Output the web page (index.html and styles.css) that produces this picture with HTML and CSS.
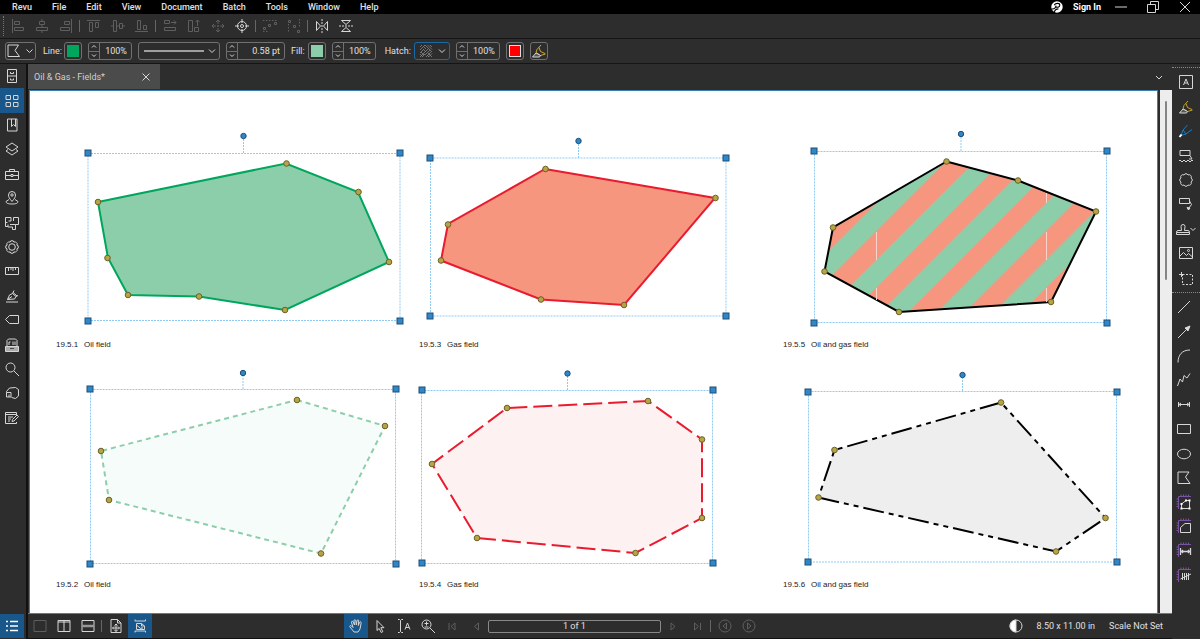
FILE: index.html
```
<!DOCTYPE html>
<html lang="en">
<head>
<meta charset="utf-8">
<title>Oil &amp; Gas - Fields</title>
<link rel="stylesheet" href="styles.css">
</head>
<body>
<div class="app">
  <header class="menubar">
    <nav class="menus" aria-label="Main menu">
      <button>Revu</button><button>File</button><button>Edit</button><button>View</button><button>Document</button><button>Batch</button><button>Tools</button><button>Window</button><button>Help</button>
    </nav>
    <div class="account">
      <svg class="brand" viewBox="0 0 13 13"><circle cx="6.500" cy="6.500" r="6.200" fill="#fff"/><path d="M3.500 4.500C5 2 9.500 2 9.500 4.500S6.500 7 5.500 6.500M.5 8.500C3 9 5 7.500 5.500 5M3.500 12.500C4 10 6 8.500 8 8.500" fill="none" stroke="#000" stroke-width="1.200"/></svg>
      <button class="signin">Sign In</button>
    </div>
    <div class="window-controls">
      <button aria-label="Minimize"><svg class="ic" viewBox="0 0 14 14"><path d="M1 7h12"/></svg></button>
      <button aria-label="Restore"><svg class="ic" viewBox="0 0 14 14"><path d="M1.500 4.500h8v8h-8zM4.500 4V1.500h8v8H10"/></svg></button>
      <button aria-label="Close"><svg class="ic" viewBox="0 0 14 14"><path d="M2 2l10 10M12 2L2 12"/></svg></button>
    </div>
  </header>

  <div class="toolbar align-tools" role="toolbar" aria-label="Alignment">
    <span class="grip"></span>
    <button class="tool off" aria-label="Align left"><svg class="ic" viewBox="0 0 14 14"><path d="M1.500 0v14M3.500 2.500h5v3h-5zM3.500 8.500h9v3h-9z"/></svg></button>
    <button class="tool off" aria-label="Align center"><svg class="ic" viewBox="0 0 14 14"><path d="M7 0v2.500M7 5.500v3M7 11.500V14M4.500 2.500h5v3h-5zM1.500 8.500h11v3h-11z"/></svg></button>
    <button class="tool off" aria-label="Align right"><svg class="ic" viewBox="0 0 14 14"><path d="M12.500 0v14M5.500 2.500h5v3h-5zM1.500 8.500h9v3h-9z"/></svg></button>
    <span class="sep"></span>
    <button class="tool off" aria-label="Align top"><svg class="ic" viewBox="0 0 14 14"><path d="M0 1.500h13M2.500 3.500h3v9h-3zM8.500 3.500h3v5h-3z"/></svg></button>
    <button class="tool off" aria-label="Align middle"><svg class="ic" viewBox="0 0 14 14"><path d="M0 7h2.500M5.500 7h3M11.500 7H14M2.500 1.500h3v11h-3zM8.500 4.500h3v5h-3z"/></svg></button>
    <button class="tool off" aria-label="Align bottom"><svg class="ic" viewBox="0 0 14 14"><path d="M0 12.500h13M2.500 1.500h3v9h-3zM8.500 6.500h3v4h-3z"/></svg></button>
    <span class="sep"></span>
    <button class="tool off" aria-label="Match width"><svg class="ic" viewBox="0 0 14 14"><path d="M1.500 1.500h5v3h-5zM1.500 8.500h11v3h-11zM8 3.500h5M11 1.500l2 2-2 2"/></svg></button>
    <button class="tool off" aria-label="Match height"><svg class="ic" viewBox="0 0 14 14"><path d="M1.500 1.500h4v11h-4zM7.500 8.500h4v4h-4zM10.500 7V1M8.500 3l2-2 2 2"/></svg></button>
    <button class="tool off" aria-label="Match size"><svg class="ic" viewBox="0 0 14 14"><path d="M7 1v4M7 9v4M1 7h4M9 7h4M5 3l2-2 2 2M5 11l2 2 2-2M3 5L1 7l2 2M11 5l2 2-2 2M6.500 6.500h1v1h-1z"/></svg></button>
    <button class="tool" aria-label="Center in page"><svg class="ic" viewBox="0 0 14 14"><circle cx="7" cy="7" r="4.500"/><circle cx="7" cy="7" r="1.500"/><path d="M7 0v4M7 10v4M0 7h4M10 7h4"/></svg></button>
    <span class="sep"></span>
    <button class="tool off" aria-label="Distribute horizontally"><svg class="ic" viewBox="0 0 14 14"><path d="M0 1.500h14M0 12.500h5" stroke-dasharray="1.500 1.500"/><path d="M.5 8.500h2v2h-2zM5.500 5.500h2v2h-2zM11.500 3.500h2v2h-2z"/></svg></button>
    <button class="tool off" aria-label="Distribute vertically"><svg class="ic" viewBox="0 0 14 14"><path d="M12.500 0v9M1.500 5v9" stroke-dasharray="1.500 1.500"/><path d="M1.500 1.500h2v2h-2zM6.500 6.500h2v2h-2zM10.500 11.500h2v2h-2z"/></svg></button>
    <span class="sep"></span>
    <button class="tool" aria-label="Flip horizontally"><svg class="ic" viewBox="0 0 14 14"><path d="M1.500 2.500v9L5.500 7zM12.500 2.500v9L8.500 7z"/><path d="M7 0v14" stroke-dasharray="2 1"/></svg></button>
    <button class="tool" aria-label="Flip vertically"><svg class="ic" viewBox="0 0 14 14"><path d="M2.500 1.500h9L7 5.500zM2.500 12.500h9L7 8.500z"/><path d="M0 7h14" stroke-dasharray="2 1"/></svg></button>
  </div>

  <div class="toolbar properties" role="toolbar" aria-label="Properties">
    <div class="picker shape"><svg class="face" viewBox="0 0 29 16"><path d="M2 2h10.500L9 7.500l4.500 6H2zM20.500 6.500l3 3 3-3"/></svg><select aria-label="Shape"><option aria-label="Polygon"></option></select></div>
    <div class="field line-field"><span class="label" id="line-label">Line:</span><button class="swatch" aria-labelledby="line-label"><i class="green"></i></button></div>
    <div class="spinner"><span class="steps"><button aria-label="Increase"><svg viewBox="0 0 8 5"><path d="M2 3.500l2-2 2 2"/></svg></button><button aria-label="Decrease"><svg viewBox="0 0 8 5"><path d="M2 1.500l2 2 2-2"/></svg></button></span><input value="100%" aria-label="Line opacity"></div>
    <div class="picker line"><svg class="face" viewBox="0 0 80 16"><path d="M5 8h60" stroke-width="1.500" stroke="#c4c4c4"/><path d="M70 6.500l3 3 3-3"/></svg><select aria-label="Line style"><option aria-label="Solid"></option></select></div>
    <div class="spinner wide"><span class="steps"><button aria-label="Increase"><svg viewBox="0 0 8 5"><path d="M2 3.500l2-2 2 2"/></svg></button><button aria-label="Decrease"><svg viewBox="0 0 8 5"><path d="M2 1.500l2 2 2-2"/></svg></button></span><input value="0.58 pt" aria-label="Line width"></div>
    <div class="field"><span class="label" id="fill-label">Fill:</span><button class="swatch" aria-labelledby="fill-label"><i class="mint"></i></button></div>
    <div class="spinner"><span class="steps"><button aria-label="Increase"><svg viewBox="0 0 8 5"><path d="M2 3.500l2-2 2 2"/></svg></button><button aria-label="Decrease"><svg viewBox="0 0 8 5"><path d="M2 1.500l2 2 2-2"/></svg></button></span><input value="100%" aria-label="Fill opacity"></div>
    <div class="field hatch-field"><label class="label" for="hatch">Hatch:</label><div class="picker hatch"><svg class="face" viewBox="0 0 34 16"><path stroke="#858585" stroke-width=".8" d="M5 4l2-2M5 7l5-5M5 10l4-4M5 14l4-4M7 14l3-3M10 2l7 7M12.500 2L17 6.500M15 2l2 2M9 4l2 2M8 6l3 3M9 10l4-4M10 12l5-5M11 14l5-5M13.500 14l3.500-3.500M5 11l3 3M6 9l3 3M13 10l4 4M12 12l2 2"/><path d="M24 6.500l3 3 3-3"/></svg><select id="hatch"><option aria-label="Cross hatch"></option></select></div></div>
    <div class="spinner"><span class="steps"><button aria-label="Increase"><svg viewBox="0 0 8 5"><path d="M2 3.500l2-2 2 2"/></svg></button><button aria-label="Decrease"><svg viewBox="0 0 8 5"><path d="M2 1.500l2 2 2-2"/></svg></button></span><input value="100%" aria-label="Hatch scale"></div>
    <button class="swatch" aria-label="Hatch color"><i class="red"></i></button>
    <button class="swatch" aria-label="Highlight"><svg class="ic" viewBox="0 0 14 14"><path stroke="#d3a928" d="M9 1L5 5.500 4 8.500l4.500 3 5-1.500M7 3.500l1.500 4 4.500 2"/><path d="M4 9l-3.500 4h7l1-1.500z" fill="#555"/></svg></button>
  </div>

  <nav class="rail left" aria-label="Panels">
    <div class="stack panels">
    <button aria-label="File access"><svg class="ic" viewBox="0 0 14 14"><path d="M2.500 .5h9v13h-9zM2.500 7h9M5.500 3v1.500h3V3M5.500 9.500V11h3V9.500"/></svg></button>
    <button class="active" aria-label="Thumbnails"><svg class="ic" viewBox="0 0 14 14"><path d="M1 1.500h4.500v4H1zM8.500 1.500H13v4H8.500zM1 8.500h4.500v4H1zM8.500 8.500H13v4H8.500z"/></svg></button>
    <button aria-label="Bookmarks"><svg class="ic" viewBox="0 0 14 14"><path d="M2.500 1v12h9.500V1zM6.500 1v7.500l2-2 2 2V1"/></svg></button>
    <button aria-label="Layers"><svg class="ic" viewBox="0 0 14 14"><path d="M7 1l6 4-6 4-6-4zM3 7.500l-2 1.500 6 4 6-4-2-1.500"/></svg></button>
    <button aria-label="Tool chest"><svg class="ic" viewBox="0 0 14 14"><path d="M.5 4.500h13v8H.5zM4.500 4.500v-2h5v2M.5 8.500H6M8 8.500h5.500M6 7.500h2v2H6z"/></svg></button>
    <button aria-label="Places"><svg class="ic" viewBox="0 0 14 14"><path d="M7 10.500C4.500 7.500 3.500 6 3.500 4a3.500 3.500 0 017 0c0 2-1 3.500-3.500 6.500zM4 8.500L1 10.500c0 2 3 2.500 6 2.500s6-.5 6-2.500L10 8.500"/><circle cx="7" cy="4" r="1.200"/></svg></button>
    <button aria-label="Spaces"><svg class="ic" viewBox="0 0 14 14"><path d="M6 1.500H.5v9H3M6 1.500V5H3.500M8.500 1.500h5v7h-3M.5 6.500h2M8.500 1.500V5M5 8.500h5.500v5H7.500v-2.500H3V8.500"/></svg></button>
    <button aria-label="Properties"><svg class="ic" viewBox="0 0 14 14"><circle cx="7" cy="7" r="3.300"/><path d="M5.800 .8h2.400l.7 1.300 1.500-.3 1.800 1.800-.3 1.500 1.300.7v2.400l-1.300.7.3 1.500-1.800 1.800-1.500-.3-.7 1.300H5.800l-.7-1.300-1.500.3-1.800-1.800.3-1.500-1.300-.7V5.800l1.300-.7-.3-1.500 1.800-1.800 1.500.3z"/></svg></button>
    <button aria-label="Measurements"><svg class="ic" viewBox="0 0 14 14"><path d="M.5 3.500h13v7H.5zM3.500 4v3M6 4v2M8 4v3M10.500 4v2"/></svg></button>
    <button aria-label="Signatures"><svg class="ic" viewBox="0 0 14 14"><path d="M1 13h12M2.500 10.500L4.500 6l3-1.500 3.500 3L9.500 10zM2.500 10.500L7 7.500M7.500 4.500l1.500-3M11 7.500l2-1M8 3.500l4 3.500"/></svg></button>
    <button aria-label="Forms"><svg class="ic" viewBox="0 0 14 14"><path d="M4.500 2.500h9v8h-9L.5 6.500z"/></svg></button>
    <button aria-label="Sets"><svg class="ic" viewBox="0 0 14 14"><path d="M2 8V2.500L3.500 1h7L12 2.500V8M4 7V4h1.500M8 3.500V7M10 3.500V7"/><path d="M.5 8.500h13v5H.5z" fill="#aaa"/><path d="M5 10.500h4" stroke="#444"/></svg></button>
    <button aria-label="Search"><svg class="ic" viewBox="0 0 14 14"><circle cx="5.500" cy="5.500" r="4.500"/><path d="M9 9l5 5"/></svg></button>
    <button aria-label="Model tree"><svg class="ic" viewBox="0 0 14 14"><path d="M1.500 6.500v-1L4.500 2l6-.5 3 2V10l-3 2.500-4-1M1.500 6.500h4.500v4.500H1.500zM4 11V8.500"/></svg></button>
    <button aria-label="Markups"><svg class="ic" viewBox="0 0 14 14"><path d="M11.500 4V1.500H.5v11h11V11M.5 3.500h11M3 6h5M3 8h3M3 10h2M7 10.500l.5-2L12 4l1.500 1.500L9 10z"/></svg></button>
    </div>
    <button class="active list-toggle" aria-label="Markups list"><svg class="ic" viewBox="0 0 14 14"><path d="M5 2.500h8M5 7h8M5 11.500h8M1 2.500h2M1 7h2M1 11.500h2" stroke-width="1.500" stroke="#fff"/></svg></button>
  </nav>

  <section class="workspace">
    <div class="tabs">
      <div class="tab"><span>Oil &amp; Gas - Fields*</span><button aria-label="Close tab"><svg class="ic small" viewBox="0 0 10 10"><path d="M1.500 1.500l7 7M8.500 1.500l-7 7"/></svg></button></div>
      <button class="tab-menu" aria-label="More tabs"><svg class="ic small" viewBox="0 0 10 10"><path d="M2 4l3 3 3-3"/></svg></button>
    </div>
    <div class="view">
      <main class="page">
        <svg class="drawing" viewBox="30 91 1127 522" role="img" aria-label="Field symbols">
          <defs>
            <pattern id="stripes" width="40" height="40" patternUnits="userSpaceOnUse" patternTransform="rotate(45) translate(23 0)"><path fill="#8dceaa" d="M0 0h40v40H0z"/><path fill="#f7967f" d="M0 0h20.500v40H0z"/></pattern>
            <rect id="h" x="-3" y="-3" width="6" height="6" class="handle"/>
            <circle id="r" r="2.700" class="handle"/>
            <circle id="v" r="2.800" class="vertex"/>
          </defs>
          <g class="frame">
            <path d="M88 153.500H400V320.500H88zM243.500 153V136"/><path d="M430.500 158H726V316H430.500zM578.500 158V141"/><path d="M814.500 151.500H1106.500V322.500H814.500zM961 151V134"/>
            <path d="M90.500 389.500H395.500V563.500H90.500zM243 389V373"/><path d="M421.500 390.500H712.500V563.500H421.500zM567.500 390V373"/><path d="M808.500 391.500H1116.500V562H808.500zM962.500 391V375"/>
          </g>
          <path class="oil" d="M98 202L286 163.500 358 192 389 262 285 310 199 296.500 128 295 108 258z"/>
          <path class="gas" d="M545 169L715 198 624 305 541 299.500 441 260.500 448 224z"/>
          <path class="both" d="M946.500 161.500L1018 180.500 1096 211.500 1051 302 899 312 824.500 271.500 833 227.500z"/>
          <path class="seam" d="M876.500 232v28M876.500 288v12M1046.500 193v10M1046.500 232v28M1046.500 288v14"/>
          <path class="oil dashed" d="M297 400L385 426 321 553.500 109 500 101 451z"/>
          <path class="gas dashed" d="M477 538L635.500 553 702 518 702 439.500 648 401 507 408 432 464z"/>
          <path class="both dashed" d="M818.500 497.500L1056 551.500 1105.500 518 1001 402.500 834.500 450z"/>
          <use href="#h" x="88" y="153"/><use href="#h" x="400" y="153"/><use href="#h" x="88" y="321"/><use href="#h" x="400" y="321"/><use href="#r" x="243.500" y="136"/>
          <use href="#h" x="430" y="158"/><use href="#h" x="726" y="158"/><use href="#h" x="430" y="316"/><use href="#h" x="726" y="316"/><use href="#r" x="578.500" y="141"/>
          <use href="#h" x="814" y="151"/><use href="#h" x="1107" y="151"/><use href="#h" x="814" y="323"/><use href="#h" x="1107" y="323"/><use href="#r" x="961" y="134"/>
          <use href="#h" x="90" y="389"/><use href="#h" x="396" y="389"/><use href="#h" x="90" y="564"/><use href="#h" x="396" y="564"/><use href="#r" x="243" y="373"/>
          <use href="#h" x="422" y="390"/><use href="#h" x="713" y="390"/><use href="#h" x="422" y="563"/><use href="#h" x="713" y="563"/><use href="#r" x="567.500" y="373.500"/>
          <use href="#h" x="808" y="392"/><use href="#h" x="1117" y="392"/><use href="#h" x="808" y="562"/><use href="#h" x="1117" y="562"/><use href="#r" x="962.500" y="375"/>
          <use href="#v" x="98" y="202"/><use href="#v" x="286.500" y="163.500"/><use href="#v" x="358.500" y="192"/><use href="#v" x="389" y="262"/><use href="#v" x="285" y="310"/><use href="#v" x="199" y="296.500"/><use href="#v" x="128" y="295"/><use href="#v" x="107.500" y="258"/>
          <use href="#v" x="545.500" y="169"/><use href="#v" x="715.500" y="198"/><use href="#v" x="624" y="305"/><use href="#v" x="541" y="299.500"/><use href="#v" x="441" y="260.500"/><use href="#v" x="448" y="224.500"/>
          <use href="#v" x="946.500" y="161.500"/><use href="#v" x="1018" y="180.500"/><use href="#v" x="1096" y="211.500"/><use href="#v" x="1051" y="302"/><use href="#v" x="899" y="312"/><use href="#v" x="824.500" y="271.500"/><use href="#v" x="833" y="227.500"/>
          <use href="#v" x="297" y="400"/><use href="#v" x="385" y="426"/><use href="#v" x="321" y="553.500"/><use href="#v" x="109" y="500"/><use href="#v" x="101" y="451"/>
          <use href="#v" x="507" y="408"/><use href="#v" x="648" y="401"/><use href="#v" x="702" y="439.500"/><use href="#v" x="702" y="518"/><use href="#v" x="635.500" y="553"/><use href="#v" x="477" y="538"/><use href="#v" x="432" y="464"/>
          <use href="#v" x="1001" y="402.500"/><use href="#v" x="1105.500" y="518"/><use href="#v" x="1056" y="551.500"/><use href="#v" x="818.500" y="497.500"/><use href="#v" x="834.500" y="450"/>
          <g class="caption">
            <text x="56" y="347">19.5.1</text><text x="84" y="347">Oil field</text>
            <text x="419" y="347">19.5.3</text><text x="447" y="347">Gas field</text>
            <text x="783" y="347">19.5.5</text><text x="811" y="347">Oil and gas field</text>
            <text x="56" y="587">19.5.2</text><text x="84" y="587">Oil field</text>
            <text x="419" y="587">19.5.4</text><text x="447" y="587">Gas field</text>
            <text x="783" y="587">19.5.6</text><text x="811" y="587">Oil and gas field</text>
          </g>
        </svg>
      </main>
      <div class="scrollbar"><span class="thumb"></span></div>
    </div>
    <footer class="statusbar">
      <div class="group layout-tools">
        <button class="tool off" aria-label="Unsplit"><svg class="ic" viewBox="0 0 14 14"><path d="M1 1.500h12v11H1z"/></svg></button>
        <button class="tool" aria-label="Split vertical"><svg class="ic" viewBox="0 0 14 14"><path d="M1 1.500h12v11H1zM7 1.500v11M1 3h12"/></svg></button>
        <button class="tool" aria-label="Split horizontal"><svg class="ic" viewBox="0 0 14 14"><path d="M1 1.500h12v11H1z"/><path d="M1 7h12" stroke-width="2.500" stroke="#999"/></svg></button>
        <span class="sep"></span>
        <button class="tool" aria-label="Fit page"><svg class="ic" viewBox="0 0 14 14"><path d="M2 .5h6.500l3.500 3.500v9.500H2zM8.500 .5V4H12"/><path d="M7 5v7.500M3.500 9h7M5.500 6.500L7 5l1.500 1.500M5.500 11L7 12.500 8.500 11M5 7.500L3.500 9 5 10.500M9 7.500L10.500 9 9 10.500"/></svg></button>
        <button class="tool active" aria-label="Fit width"><svg class="ic" viewBox="0 0 14 14"><path d="M2 .5v1.500h10.500V.5M3.500 4.500h5l3 2.500v3.500h-8zM8.500 4.500V7h3M2 13.500V12h10.500v1.500M4 6.500l5 4M9 8v2.500H6.500"/></svg></button>
      </div>
      <div class="group nav-tools">
        <button class="tool active" aria-label="Pan"><svg class="ic" viewBox="0 0 14 14"><path d="M5 13L1 8c-.8-1.200.5-2 1.500-1L4 8.500 2.500 3.500c-.3-1.500 1.200-1.800 1.700-.5L5.500 6 5 1.800c0-1.500 1.600-1.500 1.800 0L7.300 6 8 1.800c.2-1.400 1.800-1.200 1.700.2L9.300 6.500l1.200-3c.5-1.200 2-.8 1.600.7L11 10l-2 3z"/></svg></button>
        <button class="tool" aria-label="Select"><svg class="ic" viewBox="0 0 14 14"><path d="M4 1.500v10L6.200 9.500l2 4 1.600-.8-2-4H11z"/></svg></button>
        <button class="tool" aria-label="Select text"><svg class="ic" viewBox="0 0 14 14"><path d="M1 .5h1.500l1 1 1-1H6M3.500 1.500v11M1 13.500h1.500l1-1 1 1H6M8 10.500l2.500-6.500 2.500 6.500M9 8.500h3"/></svg></button>
        <button class="tool" aria-label="Zoom"><svg class="ic" viewBox="0 0 14 14"><circle cx="5.500" cy="5.500" r="4.500"/><path d="M9 9l5 5M5.500 2.500v4M3.500 4.500h4M3.500 8h4"/></svg></button>
        <button class="tool off" aria-label="First page"><svg class="ic" viewBox="0 0 14 14"><path d="M4 4v7M10 4v7L6 7.500z"/></svg></button>
        <button class="tool off" aria-label="Previous page"><svg class="ic" viewBox="0 0 14 14"><path d="M9.500 4v7l-4-3.500z"/></svg></button>
        <input class="page-number" value="1 of 1" aria-label="Page">
        <button class="tool off" aria-label="Next page"><svg class="ic" viewBox="0 0 14 14"><path d="M5 4v7l4-3.500z"/></svg></button>
        <button class="tool off" aria-label="Last page"><svg class="ic" viewBox="0 0 14 14"><path d="M4.500 4v7l4-3.500zM10.500 4v7"/></svg></button>
        <span class="sep"></span>
        <button class="tool off" aria-label="Previous view"><svg class="ic" viewBox="0 0 14 14"><circle cx="7" cy="7" r="6"/><path d="M8.500 4v6L5 7z"/></svg></button>
        <button class="tool off" aria-label="Next view"><svg class="ic" viewBox="0 0 14 14"><circle cx="7" cy="7" r="6"/><path d="M5.500 4v6L9 7z"/></svg></button>
      </div>
      <div class="group info">
        <button class="tool" aria-label="Dimmer"><svg class="ic" viewBox="0 0 14 14"><circle cx="7" cy="7" r="6"/><path d="M7 1a6 6 0 000 12z" fill="#fff"/></svg></button>
        <span>8.50 x 11.00 in</span>
        <span>Scale Not Set</span>
      </div>
    </footer>
  </section>

  <nav class="rail right" aria-label="Markup tools">
    <div class="stack markup">
    <button aria-label="Text box"><svg class="ic" viewBox="0 0 14 14"><path d="M.5 .5h13v13H.5zM4.500 10L7 4l2.500 6M5.500 8h3"/></svg></button>
    <button aria-label="Highlight"><svg class="ic" viewBox="0 0 14 14"><path stroke="#c9a12b" d="M9 1L5 5.500 4 8.500l4.500 3 5-1.500M7 3.500l1.500 4 4.500 2"/><path d="M4 9l-3.500 4h7l1-1.500z" fill="#555"/></svg></button>
    <button aria-label="Pen"><svg class="ic" viewBox="0 0 14 14"><path d="M8.500 1L4 6 2 11.500 7 10l6-4.500M4 6l3 4" stroke="#1a7cc0"/><path d="M2.500 10.500L.5 13" stroke="#fff" stroke-width="2"/></svg></button>
    <button aria-label="Text comment"><svg class="ic" viewBox="0 0 14 14"><path d="M1 1.500h10v5H1zM2 6.500h9l2 3.500h-3"/><path d="M0 12q1-2 2 0t2 0 2 0 2 0 2 0 2 0 2 0"/></svg></button>
    <button aria-label="Cloud"><svg class="ic" viewBox="0 0 14 14"><path d="M5 2a2.200 2.200 0 014 0 2.200 2.200 0 013 3 2.200 2.200 0 010 4 2.200 2.200 0 01-3 3 2.200 2.200 0 01-4 0 2.200 2.200 0 01-3-3 2.200 2.200 0 010-4 2.200 2.200 0 013-3z"/></svg></button>
    <button aria-label="Callout"><svg class="ic" viewBox="0 0 14 14"><path d="M.5 1.500h10v5H.5zM10.500 4l2 3.500-2.500 3.500"/><path d="M8 10.500l1.500 2.500 1.500-2z" fill="#ddd"/></svg></button>
    <button class="stamp" aria-label="Stamp"><svg class="ic" viewBox="0 0 14 14"><path d="M5.500 8.500L5 4.500a2 2 0 114 0l-.5 4H12q1.500 0 1.500 2v2H.5v-2q0-2 1.500-2zM.5 10.500h13"/></svg><svg class="caret" viewBox="0 0 6 6"><path d="M.5 2L3 4.500 5.500 2"/></svg></button>
    <button aria-label="Image"><svg class="ic" viewBox="0 0 14 14"><path d="M.5 1.500h13v11H.5zM1 10l3.500-3.500 3 3 2-2 3.500 3"/><circle cx="9.500" cy="4.500" r="1"/></svg></button>
    <button aria-label="Snapshot"><svg class="ic" viewBox="0 0 14 14"><path d="M3.500 3.500h10v10h-10z" stroke-dasharray="2 1.500"/><path d="M0 3.500h5M2.500 1v5"/></svg></button>
    </div>
    <div class="stack shapes">
    <button aria-label="Line"><svg class="ic" viewBox="0 0 14 14"><path d="M1 13L13 1"/></svg></button>
    <button aria-label="Arrow"><svg class="ic" viewBox="0 0 14 14"><path d="M1 13l9-9"/><path d="M8 3l5-2-2 5z" fill="#ddd"/></svg></button>
    <button aria-label="Arc"><svg class="ic" viewBox="0 0 14 14"><path d="M1 13.500C1 6 5 1 13 1"/></svg></button>
    <button aria-label="Polyline"><svg class="ic" viewBox="0 0 14 14"><path d="M.5 13L3 6l2.500 3L7 2.500l3 2.500 3-4.500"/></svg></button>
    <button aria-label="Dimension"><svg class="ic" viewBox="0 0 14 14"><path d="M1.500 4v5M12.500 4v5M2 6.500h10M4 5L2 6.500 4 8M10 5l2 1.500L10 8"/></svg></button>
    <button aria-label="Rectangle"><svg class="ic" viewBox="0 0 14 14"><path d="M.5 2.500h13v9H.5z"/></svg></button>
    <button aria-label="Ellipse"><svg class="ic" viewBox="0 0 14 14"><ellipse cx="7" cy="7" rx="6.500" ry="4.800"/></svg></button>
    <button aria-label="Polygon"><svg class="ic" viewBox="0 0 14 14"><path d="M1 1h11L8.500 6l4.500 6.500H1z"/></svg></button>
    <button aria-label="Polylength"><svg class="ic" viewBox="0 0 14 14"><path class="ruler" d="M1.500 13V.5H14M-.5 3h2M-.5 5.500h2M-.5 8h2M-.5 10.500h2M4-1.500v2M6.500-1.500v2M9-1.500v2M11.500-1.500v2"/><path d="M4.500 8V12.500h8V4.500H9M9 4.500L4.500 8"/><path class="dot" d="M4.500 8v.01M4.500 12.500v.01M12.500 12.500v.01M12.500 4.500v.01M9 4.500v.01"/></svg></button>
    <button aria-label="Area"><svg class="ic" viewBox="0 0 14 14"><path class="ruler" d="M1.500 13V.5H14M-.5 3h2M-.5 5.500h2M-.5 8h2M-.5 10.500h2M4-1.500v2M6.500-1.500v2M9-1.500v2M11.500-1.500v2"/><path d="M3.500 7.500L8 3.500h5.500v9h-10z"/></svg></button>
    <button aria-label="Length"><svg class="ic" viewBox="0 0 14 14"><path class="ruler" d="M1.500 13V.5H14M-.5 3h2M-.5 5.500h2M-.5 8h2M-.5 10.500h2M4-1.500v2M6.500-1.500v2M9-1.500v2M11.500-1.500v2"/><path d="M3.500 4v7M13.500 4v7M4 7.500h9M6 6L4.500 7.500 6 9M11 6l1.500 1.500L11 9" stroke-width="1.300"/></svg></button>
    <button aria-label="Count"><svg class="ic" viewBox="0 0 14 14"><path class="ruler" d="M1.500 13V.5H14M-.5 3h2M-.5 5.500h2M-.5 8h2M-.5 10.500h2M4-1.500v2M6.500-1.500v2M9-1.500v2M11.500-1.500v2"/><path d="M5.500 4v7M7.500 4v7M9.500 4v7M11.500 4v7M3.500 10L14 5"/></svg></button>
    </div>
  </nav>
</div>
</body>
</html>
```

FILE: styles.css
```
* { box-sizing: border-box; }

body {
  margin: 0;
  background: #2d2d2d;
  color: #e0e0e0;
  font: 9px/12px Roboto, "Liberation Sans", sans-serif;
}

button, input, select { font: inherit; color: inherit; }
button {
  display: flex;
  align-items: center;
  justify-content: center;
  padding: 0;
  border: 0;
  background: none;
}
svg { display: block; overflow: visible; }

.app {
  display: grid;
  grid-template-columns: 28px minmax(0, 1fr) 28px;
  grid-template-rows: 14px 25px 25px minmax(0, 1fr);
  min-height: 100vh;
}

.menubar, .toolbar { grid-column: 1 / -1; display: flex; align-items: center; }
.menubar { background: #000; }
.menus { display: flex; gap: 20px; padding-left: 12px; font-weight: 500; }
.account { display: flex; align-items: center; gap: 10px; margin-left: auto; }
.brand { width: 12px; height: 12px; }
.signin { font-weight: 700; color: #fff; }
.window-controls { display: flex; gap: 18px; padding: 0 8px 0 13px; }

.ic { width: 14px; height: 14px; flex: none; fill: none; stroke: #d6d6d6; stroke-width: 1; }
.ic.small { width: 10px; height: 10px; }
.toolbar { border-bottom: 1px solid #151515; }
.align-tools { padding-left: 3px; }
.grip { width: 3px; height: 20px; border-left: 1px dotted #777; }
.tool { width: 24px; height: 24px; }
.tool.off { color: #5f5f5f; }
.tool.off .ic { stroke: #5f5f5f; }
.active { background: #19578a; }
.sep { width: 1px; height: 12px; margin: 0 2px 0 1px; background: #666; }

.properties { gap: 6px; padding-left: 5px; }
.picker {
  display: grid;
  height: 18px;
  border: 1px solid #707070;
  border-radius: 3px;
}
.picker > * { grid-area: 1 / 1; width: 100%; height: 100%; min-width: 0; }
.picker select { appearance: none; border: 0; background: none; padding: 0; }
.picker .face { fill: none; stroke: #d6d6d6; }
.shape { width: 31px; }
.line { width: 82px; }
.hatch { width: 36px; border-color: #1b6aa5; }
.field { display: flex; align-items: center; gap: 3px; }
.line-field { padding-left: 1px; gap: 2px; }
.hatch-field { padding-left: 3px; }
.swatch { width: 18px; height: 18px; border: 1px solid #707070; border-radius: 3px; }
.swatch i { width: 12px; height: 12px; }
.green { background: #00a65e; }
.mint { background: #8dceaa; }
.red { background: #f00; border: 1px solid #ddd; }
.spinner {
  display: flex;
  width: 44px;
  height: 18px;
  border: 1px solid #707070;
  border-radius: 3px;
}
.spinner.wide { width: 59px; }
.steps { display: grid; width: 11px; flex: none; border-right: 1px solid #707070; }
.steps button + button { border-top: 1px solid #707070; }
.steps svg { width: 8px; height: 5px; fill: none; stroke: #d6d6d6; }
.spinner input { width: 100%; min-width: 0; padding: 0 4px 0 0; border: 0; background: none; text-align: right; }

.rail { display: flex; flex-direction: column; }
.left { border-right: 2px solid #111; padding-right: 2px; justify-content: space-between; }
.stack { display: grid; grid-auto-rows: 1fr; }
.stack button { width: 100%; min-height: 0; }
.panels { height: 366px; }
.list-toggle { height: 24px; margin-bottom: 1px; }
.right { padding-top: 3px; }
.markup { height: 223px; padding-top: 2px; border-top: 1px dotted #888; }
.shapes { height: 296px; margin-top: 2px; padding: 2px 4px 0 0; border-top: 1px dotted #888; }
.stamp .caret { width: 6px; height: 6px; fill: none; stroke: #d6d6d6; }
.ruler { stroke: #7a53a0; }
.dot { stroke: #fff; stroke-width: 2; stroke-linecap: square; }

.workspace { display: flex; flex-direction: column; min-width: 0; }
.tabs { display: flex; height: 26px; justify-content: space-between; align-items: flex-start; }
.tab {
  display: flex;
  align-items: center;
  justify-content: space-between;
  width: 132px;
  height: 25px;
  padding: 1px 9px 0 6px;
  background: #4b4b4b;
  color: #d0d0d0;
}
.tab-menu { padding: 8px 8px 0; }
.view { display: flex; flex: 1; min-height: 0; border-bottom: 1px solid #6c7a7a; }
.page {
  flex: 1;
  min-width: 0;
  margin: 0 2px 0 1px;
  border: 1px solid #3a7fb0;
  border-width: 1px 1px 0;
  background: #fff;
  overflow: hidden;
}
.drawing { width: 100%; height: auto; }
.scrollbar { width: 12px; padding: 11px 5px; background: #ededed; }
.thumb { display: block; width: 2px; height: 179px; border-radius: 1px; background: #858585; }

.frame path { fill: none; stroke: #8fcaf2; stroke-dasharray: 2 1; }
.handle { fill: #3186c6; stroke: #1d4f7a; }
.vertex { fill: #b6a545; stroke: #6b6128; stroke-width: 1; }
.oil { fill: #8dceaa; stroke: #00a65e; stroke-width: 2; }
.gas { fill: #f7967f; stroke: #e81c2e; stroke-width: 2; }
.both { fill: url(#stripes); stroke: #000; stroke-width: 2; }
.seam { fill: none; stroke: #fbd3ca; }
.oil.dashed { fill: #f6fcf9; stroke: #8dceaa; stroke-dasharray: 5 4; }
.gas.dashed { fill: #fef1f1; stroke-dasharray: 19 6; }
.both.dashed { fill: #eee; stroke-dasharray: 21 5 5 5 5 5; }
.caption { fill: #222; font: 8px "Liberation Sans", Arial, sans-serif; }

.statusbar { display: flex; align-items: center; height: 25px; border-bottom: 1px solid #111; }
.group { display: flex; align-items: center; }
.nav-tools { margin-left: 192px; }
.page-number { width: 173px; height: 13px; padding: 0; border: 1px solid #888; border-radius: 2px; background: none; text-align: center; }
.info { gap: 14px; margin-left: auto; padding-right: 9px; }
.info .tool { width: 14px; }
```
